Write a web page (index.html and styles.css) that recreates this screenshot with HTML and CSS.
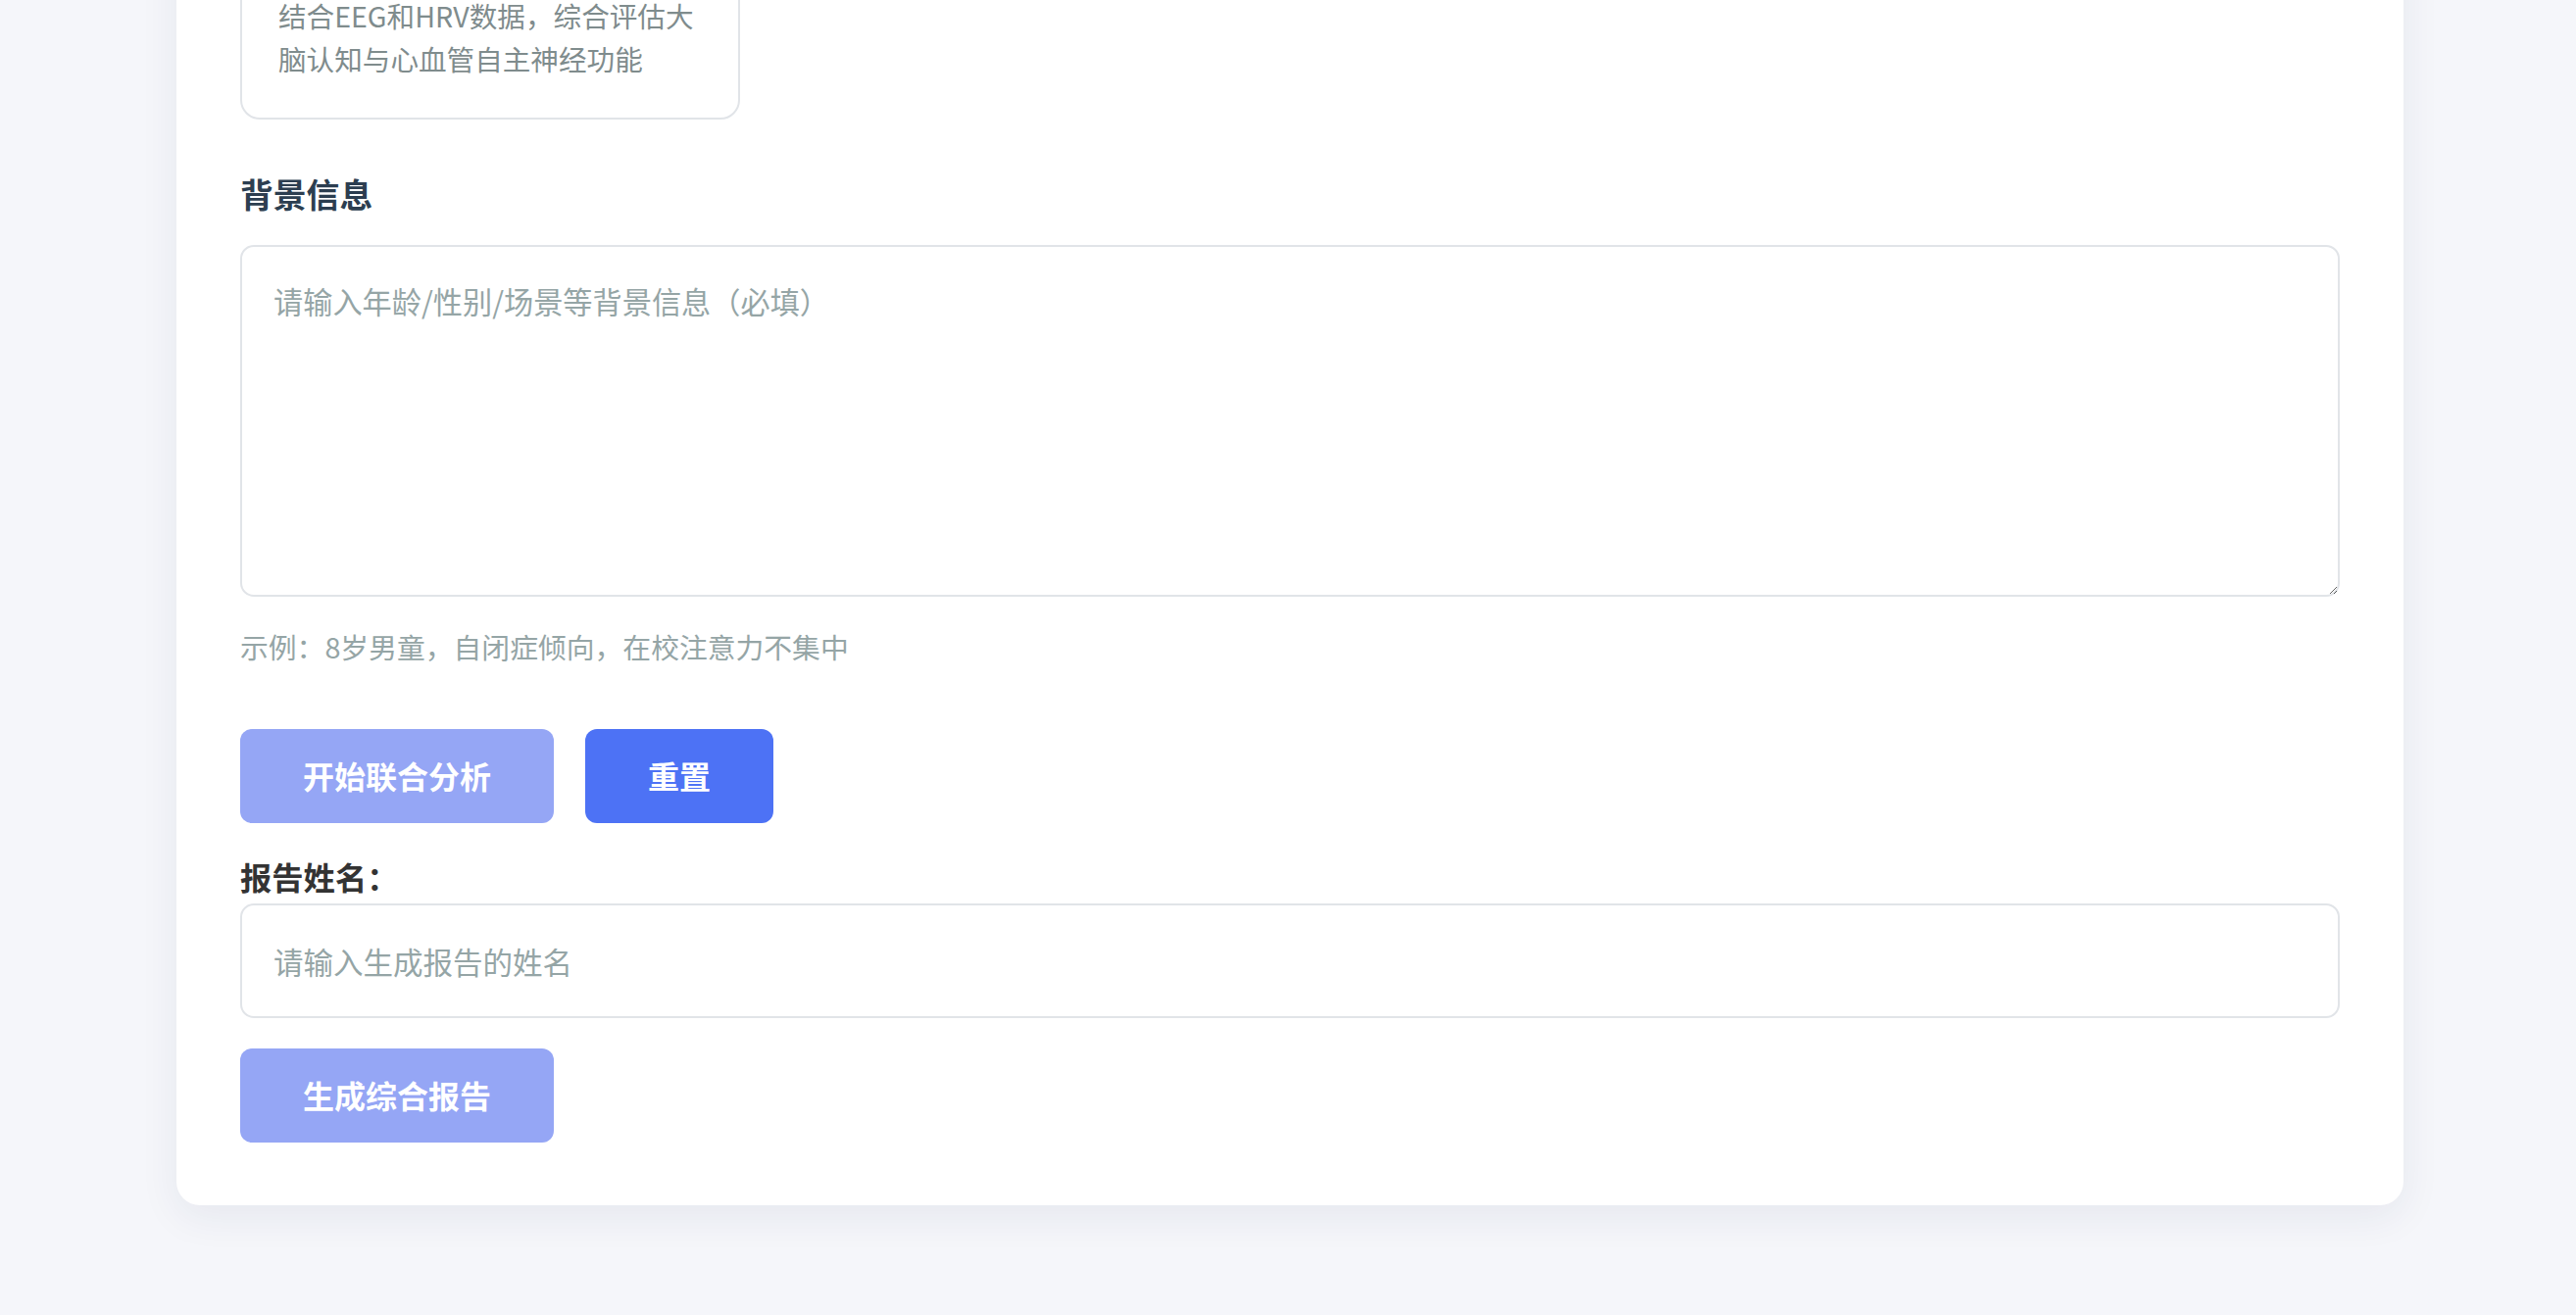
FILE: index.html
```html
<!DOCTYPE html>
<html lang="zh-CN">
<head>
    <meta charset="UTF-8">
    <meta name="viewport" content="width=device-width, initial-scale=1.0">
    <title>EEG + HRV 联合分析</title>
    <link rel="stylesheet" href="styles.css">
</head>
<body>
    <div class="page">
        <div class="card">
            <!-- 分析模式 -->
            <div class="section">
                <h2 class="section-title">分析模式</h2>
                <div class="mode-card">
                    <div class="mode-name">EEG + HRV 联合分析</div>
                    <div class="mode-desc">结合EEG和HRV数据，综合评估大脑认知与心血管自主神经功能</div>
                </div>
            </div>

            <!-- 背景信息 -->
            <div class="section">
                <h2 class="section-title">背景信息</h2>
                <textarea class="bg-input" placeholder="请输入年龄/性别/场景等背景信息（必填）"></textarea>
                <p class="hint">示例：8岁男童，自闭症倾向，在校注意力不集中</p>
            </div>

            <div class="actions">
                <button class="btn" disabled>开始联合分析</button>
                <button class="btn">重置</button>
            </div>

            <!-- 报告 -->
            <div class="report">
                <label class="report-label" for="report-name">报告姓名：</label>
                <input type="text" id="report-name" class="report-input" placeholder="请输入生成报告的姓名">
                <button class="btn" disabled>生成综合报告</button>
            </div>
        </div>
    </div>
</body>
</html>
```

FILE: styles.css
```css
body {
    margin: 0;
    background-color: #f5f6fa;
    font-family: "Noto Sans CJK SC", "Noto Sans", sans-serif;
    color: #2c3e50;
}
.page {
    margin-top: -244px;
    padding: 0 0 112px 4px;
}
.card {
    width: 2272px;
    margin: 0 auto;
    box-sizing: border-box;
    padding: 66px 65px 64px;
    background-color: #fff;
    border-radius: 24px;
    box-shadow: 0 12px 40px rgba(30, 40, 80, 0.07);
}
.section + .section {
    margin-top: 53px;
}
.section-title {
    margin: 0 0 29px;
    font-size: 33.8px;
    line-height: 46px;
    font-weight: bold;
    color: #2c3e50;
}
.mode-card {
    width: 510px;
    box-sizing: border-box;
    padding: 37px 37px 38px;
    border: 2px solid #e1e4e8;
    border-radius: 20px;
}
.mode-name {
    margin-bottom: 14px;
    font-size: 31px;
    line-height: 44px;
    font-weight: bold;
    color: #2c3e50;
}
.mode-desc {
    font-size: 28.6px;
    line-height: 44px;
    color: #7f8c8d;
}
.bg-input {
    display: block;
    width: 100%;
    height: 359px;
    box-sizing: border-box;
    margin: 0;
    padding: 32px;
    border: 2px solid #e1e4e8;
    border-radius: 14px;
    font-family: inherit;
    font-size: 30.2px;
    line-height: 47px;
    color: #2c3e50;
    outline: none;
}
.bg-input::placeholder,
.report-input::placeholder {
    color: #95a5a6;
}
.hint {
    margin: 27px 0 0;
    font-size: 28.8px;
    line-height: 47px;
    color: #95a5a6;
}
.actions {
    display: flex;
    gap: 32px;
    margin-top: 61px;
}
.btn {
    height: 96px;
    padding: 0 64px 3px;
    border: none;
    border-radius: 12px;
    background-color: #4d72f5;
    color: #fff;
    font-family: inherit;
    font-size: 32px;
    font-weight: bold;
    cursor: pointer;
}
.btn:disabled {
    background-color: #95a6f5;
    cursor: not-allowed;
}
.report {
    margin-top: 31px;
}
.report-label {
    display: block;
    font-size: 32.3px;
    line-height: 47px;
    font-weight: bold;
    color: #333;
}
.report-input {
    display: block;
    width: 100%;
    height: 117px;
    box-sizing: border-box;
    margin: 4px 0 31px;
    padding: 0 32px;
    border: 2px solid #e1e4e8;
    border-radius: 14px;
    font-family: inherit;
    font-size: 30.5px;
    color: #2c3e50;
    outline: none;
}
```
